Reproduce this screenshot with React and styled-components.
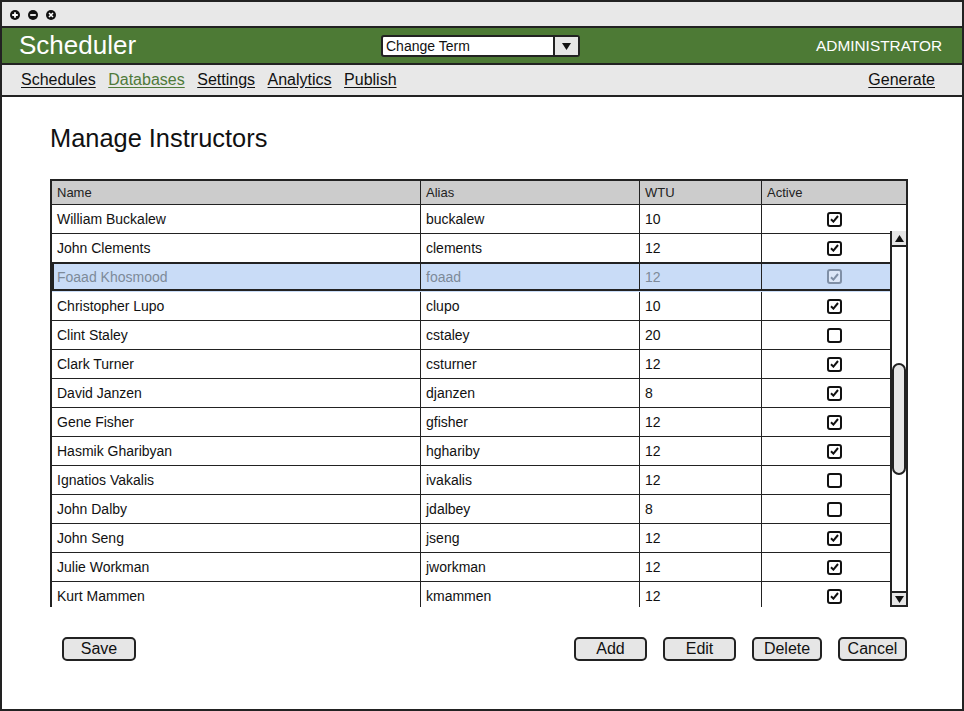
import React from 'react';
import styled, { createGlobalStyle } from 'styled-components';

const GlobalStyle = createGlobalStyle`
    html, body {
        margin: 0;
        padding: 0;
        background: #fff;
    }
    body {
        font-family: "Liberation Sans", Arial, sans-serif;
        color: #111;
    }
`;

const instructors = [
    { name: 'William Buckalew', alias: 'buckalew', wtu: 10, active: true },
    { name: 'John Clements', alias: 'clements', wtu: 12, active: true },
    { name: 'Foaad Khosmood', alias: 'foaad', wtu: 12, active: true, selected: true },
    { name: 'Christopher Lupo', alias: 'clupo', wtu: 10, active: true },
    { name: 'Clint Staley', alias: 'cstaley', wtu: 20, active: false },
    { name: 'Clark Turner', alias: 'csturner', wtu: 12, active: true },
    { name: 'David Janzen', alias: 'djanzen', wtu: 8, active: true },
    { name: 'Gene Fisher', alias: 'gfisher', wtu: 12, active: true },
    { name: 'Hasmik Gharibyan', alias: 'hghariby', wtu: 12, active: true },
    { name: 'Ignatios Vakalis', alias: 'ivakalis', wtu: 12, active: false },
    { name: 'John Dalby', alias: 'jdalbey', wtu: 8, active: false },
    { name: 'John Seng', alias: 'jseng', wtu: 12, active: true },
    { name: 'Julie Workman', alias: 'jworkman', wtu: 12, active: true },
    { name: 'Kurt Mammen', alias: 'kmammen', wtu: 12, active: true },
];

function WindowControl({ kind }) {
    return (
        <svg width="10" height="10" viewBox="0 0 10 10">
            <circle cx="5" cy="5" r="5" fill="#111" />
            {kind === 'plus' && (
                <path d="M5 2.2 V7.8 M2.2 5 H7.8" stroke="#fff" strokeWidth="1.8" />
            )}
            {kind === 'minus' && <path d="M2.2 5 H7.8" stroke="#fff" strokeWidth="1.8" />}
            {kind === 'close' && (
                <path d="M3 3 L7 7 M7 3 L3 7" stroke="#fff" strokeWidth="1.6" />
            )}
        </svg>
    );
}

function Checkbox({ checked, muted }) {
    return (
        <CheckBox $muted={muted}>
            {checked && (
                <svg width="9" height="8" viewBox="0 0 9 8">
                    <path
                        d="M1 4.2 L3.4 6.6 L8 1"
                        fill="none"
                        stroke={muted ? '#7f8fa6' : '#111'}
                        strokeWidth="2"
                    />
                </svg>
            )}
        </CheckBox>
    );
}

function App() {
    return (
        <>
            <GlobalStyle />
            <Frame>
                <TitleBar>
                    <WindowControl kind="plus" />
                    <WindowControl kind="minus" />
                    <WindowControl kind="close" />
                </TitleBar>

                <Header>
                    <Brand>Scheduler</Brand>
                    <Select>
                        <span>Change Term</span>
                        <SelectArrow>
                            <svg width="9" height="7" viewBox="0 0 9 7">
                                <path d="M0 0 H9 L4.5 7 Z" fill="#111" />
                            </svg>
                        </SelectArrow>
                    </Select>
                    <Role>ADMINISTRATOR</Role>
                </Header>

                <Nav>
                    <NavLinks>
                        <NavLink>Schedules</NavLink>
                        <NavLink $current>Databases</NavLink>
                        <NavLink>Settings</NavLink>
                        <NavLink>Analytics</NavLink>
                        <NavLink>Publish</NavLink>
                    </NavLinks>
                    <NavLink>Generate</NavLink>
                </Nav>

                <Content>
                    <PageTitle>Manage Instructors</PageTitle>

                    <Grid>
                        <HeadRow>
                            <Cell>Name</Cell>
                            <Cell>Alias</Cell>
                            <Cell>WTU</Cell>
                            <Cell>Active</Cell>
                        </HeadRow>
                        {instructors.map((row) => (
                            <Row key={row.alias} $selected={row.selected}>
                                <Cell>{row.name}</Cell>
                                <Cell>{row.alias}</Cell>
                                <Cell>{row.wtu}</Cell>
                                <Cell $center>
                                    <Checkbox checked={row.active} muted={row.selected} />
                                </Cell>
                            </Row>
                        ))}

                        <Scrollbar>
                            <ScrollButton>
                                <svg width="9" height="7" viewBox="0 0 9 7">
                                    <path d="M0 7 H9 L4.5 0 Z" fill="#111" />
                                </svg>
                            </ScrollButton>
                            <ScrollTrack>
                                <Thumb />
                            </ScrollTrack>
                            <ScrollButton $down>
                                <svg width="9" height="7" viewBox="0 0 9 7">
                                    <path d="M0 0 H9 L4.5 7 Z" fill="#111" />
                                </svg>
                            </ScrollButton>
                        </Scrollbar>
                    </Grid>

                    <Actions>
                        <Button $w={74}>Save</Button>
                        <ButtonGroup>
                            <Button $w={73}>Add</Button>
                            <Button $w={73}>Edit</Button>
                            <Button $w={70}>Delete</Button>
                            <Button $w={69}>Cancel</Button>
                        </ButtonGroup>
                    </Actions>
                </Content>
            </Frame>
        </>
    );
}

export default App;

const Frame = styled.div`
    width: 964px;
    height: 711px;
    box-sizing: border-box;
    border: 2px solid #222;
    display: flex;
    flex-direction: column;
    background: #fff;
    overflow: hidden;
`;

const TitleBar = styled.div`
    height: 24px;
    background: #e8e8e8;
    display: flex;
    align-items: center;
    gap: 8px;
    padding-left: 8px;
    padding-top: 1px;
    box-sizing: border-box;
`;

const Header = styled.div`
    height: 35px;
    background: #4d7a35;
    border-top: 2px solid #222;
    border-bottom: 2px solid #222;
    display: grid;
    grid-template-columns: 1fr auto 1fr;
    align-items: center;
    padding: 0 20px 0 17px;
`;

const Brand = styled.div`
    color: #fff;
    font-size: 26px;
    line-height: 1;
    margin-top: -1px;
`;

const Role = styled.div`
    color: #fff;
    font-size: 15.4px;
    justify-self: end;
    margin-top: 1px;
`;

const Select = styled.div`
    width: 199px;
    height: 22px;
    box-sizing: border-box;
    margin-top: 1px;
    border: 2px solid #222;
    border-radius: 3px;
    background: #fff;
    display: flex;
    align-items: center;
    font-size: 14px;
    color: #111;

    span {
        flex: 1;
        padding-left: 3px;
    }
`;

const SelectArrow = styled.div`
    width: 23px;
    height: 100%;
    border-left: 2px solid #222;
    background: #e6e6e6;
    display: flex;
    align-items: center;
    justify-content: center;
`;

const Nav = styled.div`
    height: 30px;
    background: #e8e8e8;
    border-bottom: 2px solid #222;
    display: flex;
    align-items: center;
    justify-content: space-between;
    padding: 0 27px 0 19px;
`;

const NavLinks = styled.div`
    display: flex;
    gap: 12.5px;
`;

const NavLink = styled.a`
    font-size: 16px;
    color: ${(p) => (p.$current ? '#4f7a3a' : '#111')};
    text-decoration: underline;
    text-underline-offset: 2px;
    cursor: pointer;
`;

const Content = styled.div`
    flex: 1;
    display: flex;
    flex-direction: column;
    padding: 0 54px 0 48px;
`;

const PageTitle = styled.h1`
    margin: 27px 0 27px;
    font-size: 25.4px;
    font-weight: normal;
    line-height: 28px;
    color: #111;
`;

const Grid = styled.div`
    position: relative;
    height: 428px;
    box-sizing: border-box;
    border: 2px solid #222;
    border-bottom: none;
    overflow: hidden;
`;

const columns = '368px 219px 122px 1fr';

const HeadRow = styled.div`
    display: grid;
    grid-template-columns: ${columns};
    height: 24px;
    box-sizing: border-box;
    background: #cccccc;
    border-bottom: 1px solid #222;
    font-size: 13px;
    color: #222;
`;

const Row = styled.div`
    display: grid;
    grid-template-columns: ${columns};
    box-sizing: border-box;
    font-size: 14px;
    color: ${(p) => (p.$selected ? '#7d8a99' : '#111')};
    background: ${(p) => (p.$selected ? '#c9dcf7' : '#fff')};
    box-shadow: ${(p) => (p.$selected ? 'inset 0 0 0 2px #222' : 'none')};
    margin-top: ${(p) => (p.$selected ? '-1px' : '0')};
    height: ${(p) => (p.$selected ? '30px' : '29px')};
    border-bottom: 1px solid ${(p) => (p.$selected ? 'transparent' : '#222')};

    & > div + div {
        border-left-color: ${(p) => (p.$selected ? '#7d8ca3' : '#222')};
    }
`;

const Cell = styled.div`
    display: flex;
    align-items: center;
    justify-content: ${(p) => (p.$center ? 'center' : 'flex-start')};
    padding: ${(p) => (p.$center ? '0' : '0 5px')};
    white-space: nowrap;
    overflow: hidden;

    & + & {
        border-left: 1px solid #222;
    }
`;

const CheckBox = styled.div`
    width: 15px;
    height: 15px;
    box-sizing: border-box;
    border: 2px solid ${(p) => (p.$muted ? '#7f8fa6' : '#111')};
    border-radius: 3px;
    background: ${(p) => (p.$muted ? '#dce7f8' : '#fff')};
    display: flex;
    align-items: center;
    justify-content: center;
`;

const Scrollbar = styled.div`
    position: absolute;
    top: 50px;
    right: 0;
    bottom: 0;
    width: 16px;
    box-sizing: border-box;
    border-left: 2px solid #222;
    background: #fff;
    display: flex;
    flex-direction: column;
`;

const ScrollButton = styled.div`
    height: 16px;
    box-sizing: border-box;
    background: #e6e6e6;
    border-bottom: 2px solid #222;
    border-top: ${(p) => (p.$down ? '2px solid #222' : 'none')};
    display: flex;
    align-items: center;
    justify-content: center;
`;

const ScrollTrack = styled.div`
    flex: 1;
    padding-top: 116px;
    display: flex;
    justify-content: center;
`;

const Thumb = styled.div`
    width: 14px;
    height: 112px;
    box-sizing: border-box;
    margin-left: -1px;
    border: 2px solid #222;
    border-radius: 7px;
    background: #e6e6e6;
`;

const Actions = styled.div`
    margin-top: 30px;
    display: flex;
    justify-content: space-between;
    padding-left: 12px;
    padding-right: 1px;
`;

const ButtonGroup = styled.div`
    display: flex;
    gap: 16px;
`;

const Button = styled.button`
    width: ${(p) => p.$w}px;
    height: 24px;
    box-sizing: border-box;
    border: 2px solid #222;
    border-radius: 5px;
    background: #e6e6e6;
    font-family: "Liberation Sans", Arial, sans-serif;
    font-size: 16px;
    color: #111;
    padding: 0;
    cursor: pointer;
`;
